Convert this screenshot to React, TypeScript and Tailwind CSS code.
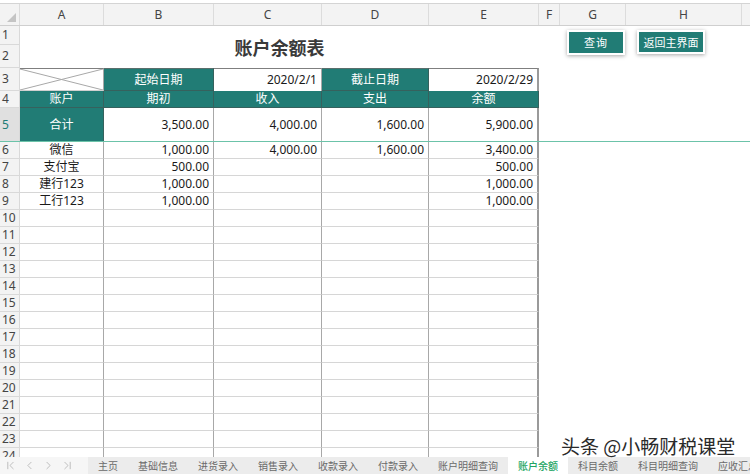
import React from "react";
import { ChevronFirst, ChevronLeft, ChevronRight, ChevronLast } from "lucide-react";

const TEAL = "bg-[#217c75] text-white border-r border-b border-[#36615d]";

function RH({ n, h, active }: { n: number | string; h: string; active?: boolean }) {
  return (
    <div
      className={`w-[20px] shrink-0 ${h} flex items-center pl-[2px] text-[12px] border-r border-b border-[#d9d9d9] ${
        active ? "bg-[#e0e0e0] text-[#217c75]" : "bg-[#f3f3f3] text-[#444]"
      }`}
    >
      {n}
    </div>
  );
}

const W = ["w-[84px]", "w-[110px]", "w-[108px]", "w-[107px]", "w-[110px]"];

function DataRow({ n, a, b, c, d, e }: { n: number; a?: string; b?: string; c?: string; d?: string; e?: string }) {
  const base = "shrink-0 h-full flex items-center border-b border-b-[#d6d6d6] border-r border-r-[#a8a8a8] text-[12px] text-[#1a1a1a]";
  return (
    <div className="flex h-[17px]">
      <RH n={n} h="h-[17px]" />
      <div className={`${W[0]} ${base} justify-center`}>{a}</div>
      <div className={`${W[1]} ${base} justify-end pr-[4px]`}>{b}</div>
      <div className={`${W[2]} ${base} justify-end pr-[4px]`}>{c}</div>
      <div className={`${W[3]} ${base} justify-end pr-[4px]`}>{d}</div>
      <div className={`${W[4]} shrink-0 h-full flex items-center justify-end pr-[4px] border-b border-b-[#d6d6d6] border-r-2 border-r-[#9a9a9a] text-[12px] text-[#1a1a1a]`}>{e}</div>
    </div>
  );
}

const data: [string, string, string, string, string][] = [
  ["微信", "1,000.00", "4,000.00", "1,600.00", "3,400.00"],
  ["支付宝", "500.00", "", "", "500.00"],
  ["建行123", "1,000.00", "", "", "1,000.00"],
  ["工行123", "1,000.00", "", "", "1,000.00"],
];

const tabs = ["主页", "基础信息", "进货录入", "销售录入", "收款录入", "付款录入", "账户明细查询", "账户余额", "科目余额", "科目明细查询", "应收汇总"];

export default function App() {
  const emptyRows: number[] = [];
  for (let i = 10; i <= 24; i++) emptyRows.push(i);
  return (
    <div className="relative w-[750px] h-[474px] overflow-hidden bg-white flex flex-col font-['Noto_Sans','Noto_Sans_CJK_SC',sans-serif]">
      <div className="h-[4px] shrink-0 border-b border-[#d4d4d4] bg-white" />
      {/* column headers */}
      <div className="h-[22px] shrink-0 flex bg-[#f3f3f3] border-b border-[#cfcfcf] text-[12px] text-[#444]">
        <div className="w-[20px] shrink-0 relative border-r border-[#dcdcdc] flex items-end justify-end pr-[3px] pb-[3px]">
          <svg width="9" height="9" viewBox="0 0 9 9">
            <polygon points="9,0 9,9 0,9" fill="#c4c4c4" />
          </svg>
        </div>
        <div className="w-[84px] shrink-0 flex items-center justify-center border-r border-[#dcdcdc]">A</div>
        <div className="w-[110px] shrink-0 flex items-center justify-center border-r border-[#dcdcdc]">B</div>
        <div className="w-[108px] shrink-0 flex items-center justify-center border-r border-[#dcdcdc]">C</div>
        <div className="w-[107px] shrink-0 flex items-center justify-center border-r border-[#dcdcdc]">D</div>
        <div className="w-[110px] shrink-0 flex items-center justify-center border-r border-[#dcdcdc]">E</div>
        <div className="w-[21px] shrink-0 flex items-center justify-center border-r border-[#dcdcdc]">F</div>
        <div className="w-[66px] shrink-0 flex items-center justify-center border-r border-[#dcdcdc]">G</div>
        <div className="w-[116px] shrink-0 flex items-center justify-center border-r border-[#dcdcdc]">H</div>
        <div className="flex-1" />
      </div>

      <div className="flex-1 min-h-0 overflow-hidden">
        {/* rows 1-2 */}
        <div className="flex h-[42px]">
          <div className="flex flex-col">
            <RH n={1} h="h-[19px]" />
            <RH n={2} h="h-[23px]" />
          </div>
          <div className="w-[519px] shrink-0 flex items-center justify-center">
            <span className="text-[18px] font-bold text-[#3a3a3a] font-['Noto_Sans_CJK_SC',sans-serif]">账户余额表</span>
          </div>
        </div>
        {/* row 3 */}
        <div className="flex h-[23px] text-[12px]">
          <RH n={3} h="h-[23px]" />
          <div className="w-[84px] shrink-0 relative border-t border-t-[#7f7f7f] border-r border-r-[#a8a8a8] border-b border-b-[#d0d0d0]">
            <svg className="absolute inset-0 w-full h-full" viewBox="0 0 100 100" preserveAspectRatio="none">
              <line x1="0" y1="0" x2="100" y2="100" stroke="#a8a8a8" strokeWidth="1" vectorEffect="non-scaling-stroke" />
              <line x1="0" y1="100" x2="100" y2="0" stroke="#a8a8a8" strokeWidth="1" vectorEffect="non-scaling-stroke" />
            </svg>
          </div>
          <div className={`w-[110px] shrink-0 flex items-center justify-center border-t border-t-[#5a6e6c] ${TEAL}`}>起始日期</div>
          <div className="w-[108px] shrink-0 flex items-center justify-end pr-[4px] border-t border-t-[#7f7f7f] border-r border-r-[#a8a8a8] text-[#1a1a1a]">2020/2/1</div>
          <div className={`w-[107px] shrink-0 flex items-center justify-center border-t border-t-[#5a6e6c] ${TEAL}`}>截止日期</div>
          <div className="w-[110px] shrink-0 flex items-center justify-end pr-[4px] border-t border-t-[#7f7f7f] border-r-2 border-r-[#9a9a9a] text-[#1a1a1a]">2020/2/29</div>
        </div>
        {/* row 4 */}
        <div className="flex h-[17px] text-[12px]">
          <RH n={4} h="h-[17px]" />
          <div className={`w-[84px] shrink-0 flex items-center justify-center ${TEAL}`}>账户</div>
          <div className={`w-[110px] shrink-0 flex items-center justify-center ${TEAL}`}>期初</div>
          <div className={`w-[108px] shrink-0 flex items-center justify-center ${TEAL}`}>收入</div>
          <div className={`w-[107px] shrink-0 flex items-center justify-center ${TEAL}`}>支出</div>
          <div className={`w-[110px] shrink-0 flex items-center justify-center ${TEAL}`}>余额</div>
        </div>
        {/* row 5 */}
        <div className="flex h-[34px] text-[12px] text-[#1a1a1a]">
          <RH n={5} h="h-[34px]" active />
          <div className={`w-[84px] shrink-0 flex items-center justify-center ${TEAL}`}>合计</div>
          <div className="w-[110px] shrink-0 flex items-center justify-end pr-[4px] border-r border-r-[#a8a8a8]">3,500.00</div>
          <div className="w-[108px] shrink-0 flex items-center justify-end pr-[4px] border-r border-r-[#a8a8a8]">4,000.00</div>
          <div className="w-[107px] shrink-0 flex items-center justify-end pr-[4px] border-r border-r-[#a8a8a8]">1,600.00</div>
          <div className="w-[110px] shrink-0 flex items-center justify-end pr-[4px] border-r-2 border-r-[#9a9a9a]">5,900.00</div>
        </div>
        {data.map((r, i) => (
          <DataRow key={i} n={6 + i} a={r[0]} b={r[1]} c={r[2]} d={r[3]} e={r[4]} />
        ))}
        {emptyRows.map((n) => (
          <DataRow key={n} n={n} />
        ))}
      </div>

      {/* tab bar */}
      <div className="h-[17px] shrink-0 flex bg-[#ececec] text-[10px] text-[#6a6a6a] font-['Noto_Sans_CJK_SC',sans-serif]">
        <div className="w-[88px] shrink-0 flex items-center gap-[6px] pl-[4px] bg-[#f6f6f6] text-[#a0a0a0]">
          <ChevronFirst size={13} strokeWidth={1.2} />
          <ChevronLeft size={13} strokeWidth={1.2} />
          <ChevronRight size={13} strokeWidth={1.2} />
          <ChevronLast size={13} strokeWidth={1.2} />
        </div>
        {tabs.map((t) => (
          <div
            key={t}
            className={`shrink-0 px-[10px] flex items-center whitespace-nowrap ${
              t === "账户余额" ? "bg-white text-[#22a463] font-medium" : ""
            }`}
          >
            {t}
          </div>
        ))}
      </div>

      {/* freeze pane line */}
      <div className="absolute left-0 right-0 top-[141px] h-[1px] bg-[#6cc3a9]" />

      {/* buttons */}
      <div className="absolute left-[567px] top-[30px] w-[58px] h-[25px] p-[2px] bg-white shadow-[0_1px_4px_rgba(0,0,0,0.35)]">
        <div className="w-full h-full bg-[#217c75] flex items-center justify-center text-white text-[11px] tracking-[1px] font-['Noto_Sans_CJK_SC',sans-serif]">查询</div>
      </div>
      <div className="absolute left-[637px] top-[30px] w-[68px] h-[24px] p-[2px] bg-white shadow-[0_1px_4px_rgba(0,0,0,0.35)]">
        <div className="w-full h-full bg-[#217c75] flex items-center justify-center text-white text-[11px] font-['Noto_Sans_CJK_SC',sans-serif]">返回主界面</div>
      </div>

      {/* watermark */}
      <div className="absolute left-[561px] top-[436px] text-[19px] leading-none text-[#2a2a2a] whitespace-nowrap font-['Noto_Sans_CJK_SC',sans-serif] [text-shadow:0_0_2px_#fff,0_0_2px_#fff,0_0_1px_#fff]">
        头条 @小畅财税课堂
      </div>
    </div>
  );
}
